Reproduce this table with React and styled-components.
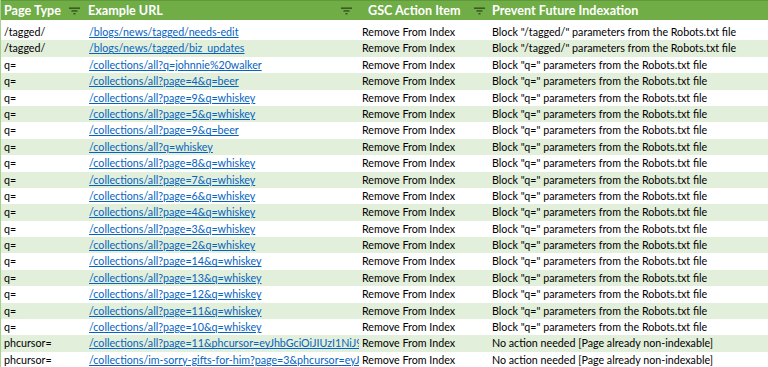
import React from 'react';
import styled, { createGlobalStyle } from 'styled-components';

const GlobalStyle = createGlobalStyle`
  html, body {
    margin: 0;
    padding: 0;
    background: #fff;
    overflow: hidden;
  }
  body {
    font-family: Lato, "Liberation Sans", sans-serif;
  }
`;

const COLUMNS = '86px 272px 130px 1fr';

const Sheet = styled.div`
  width: 768px;
  height: 367px;
  overflow: hidden;
  border-left: 1px solid #a9d08e;
  box-sizing: border-box;
`;

const HeaderRow = styled.div`
  display: grid;
  grid-template-columns: ${COLUMNS};
  height: 20px;
  background: #70ad47;
  border-top: 1px solid #5f9a3a;
  box-sizing: border-box;
  margin-left: -1px;
`;

const HeaderCell = styled.div`
  display: flex;
  align-items: center;
  justify-content: space-between;
  padding: 0 ${p => p.$padRight || 5}px 0 ${p => p.$padLeft || 4}px;
  color: #fff;
  font-weight: 700;
  font-size: 12.6px;
  white-space: nowrap;
  overflow: hidden;
`;

const Body = styled.div`
  padding-top: 4px;
`;

const Row = styled.div`
  display: grid;
  grid-template-columns: ${COLUMNS};
  height: 16.4px;
  background: ${p => (p.$alt ? '#e2efda' : '#fff')};
`;

const Cell = styled.div`
  padding-left: ${p => p.$pad || 3}px;
  font-size: 10.7px;
  line-height: 15px;
  color: #000;
  white-space: nowrap;
  overflow: hidden;
`;

const Link = styled.span`
  color: #0563c1;
  text-decoration: underline;
  text-underline-offset: 1px;
`;

const FilterIcon = () => (
  <svg width="11" height="8" viewBox="0 0 11 8" aria-hidden="true">
    <rect x="0" y="0.5" width="11" height="1.3" fill="#2d4a1c" />
    <rect x="2.5" y="3.3" width="6" height="1.3" fill="#2d4a1c" />
    <rect x="4.5" y="6.1" width="2" height="1.3" fill="#2d4a1c" />
  </svg>
);

const tagged = 'Block "/tagged/" parameters from the Robots.txt file';
const qBlock = 'Block "q=" parameters from the Robots.txt file';
const noAction = 'No action needed [Page already non-indexable]';

const rows = [
  ['/tagged/', '/blogs/news/tagged/needs-edit', tagged],
  ['/tagged/', '/blogs/news/tagged/biz_updates', tagged],
  ['q=', '/collections/all?q=johnnie%20walker', qBlock],
  ['q=', '/collections/all?page=4&q=beer', qBlock],
  ['q=', '/collections/all?page=9&q=whiskey', qBlock],
  ['q=', '/collections/all?page=5&q=whiskey', qBlock],
  ['q=', '/collections/all?page=9&q=beer', qBlock],
  ['q=', '/collections/all?q=whiskey', qBlock],
  ['q=', '/collections/all?page=8&q=whiskey', qBlock],
  ['q=', '/collections/all?page=7&q=whiskey', qBlock],
  ['q=', '/collections/all?page=6&q=whiskey', qBlock],
  ['q=', '/collections/all?page=4&q=whiskey', qBlock],
  ['q=', '/collections/all?page=3&q=whiskey', qBlock],
  ['q=', '/collections/all?page=2&q=whiskey', qBlock],
  ['q=', '/collections/all?page=14&q=whiskey', qBlock],
  ['q=', '/collections/all?page=13&q=whiskey', qBlock],
  ['q=', '/collections/all?page=12&q=whiskey', qBlock],
  ['q=', '/collections/all?page=11&q=whiskey', qBlock],
  ['q=', '/collections/all?page=10&q=whiskey', qBlock],
  ['phcursor=', '/collections/all?page=11&phcursor=eyJhbGciOiJIUzI1NiJ9', noAction],
  ['phcursor=', '/collections/im-sorry-gifts-for-him?page=3&phcursor=eyJhbGciOiJIUzI1NiJ9', noAction],
];

export default function App() {
  return (
    <>
      <GlobalStyle />
      <Sheet>
        <HeaderRow>
          <HeaderCell $padRight={6}>
            <span>Page Type</span>
            <FilterIcon />
          </HeaderCell>
          <HeaderCell $padLeft={2} $padRight={6}>
            <span>Example URL</span>
            <FilterIcon />
          </HeaderCell>
          <HeaderCell $padLeft={10} $padRight={3}>
            <span>GSC Action Item</span>
            <FilterIcon />
          </HeaderCell>
          <HeaderCell $padLeft={4}>
            <span>Prevent Future Indexation</span>
          </HeaderCell>
        </HeaderRow>
        <Body>
          {rows.map(([type, url, action], i) => (
            <Row key={i} $alt={i % 2 === 1}>
              <Cell $pad={3}>{type}</Cell>
              <Cell $pad={2}>
                <Link>{url}</Link>
              </Cell>
              <Cell $pad={3}>Remove From Index</Cell>
              <Cell $pad={3}>{action}</Cell>
            </Row>
          ))}
          <Row $alt />
        </Body>
      </Sheet>
    </>
  );
}
